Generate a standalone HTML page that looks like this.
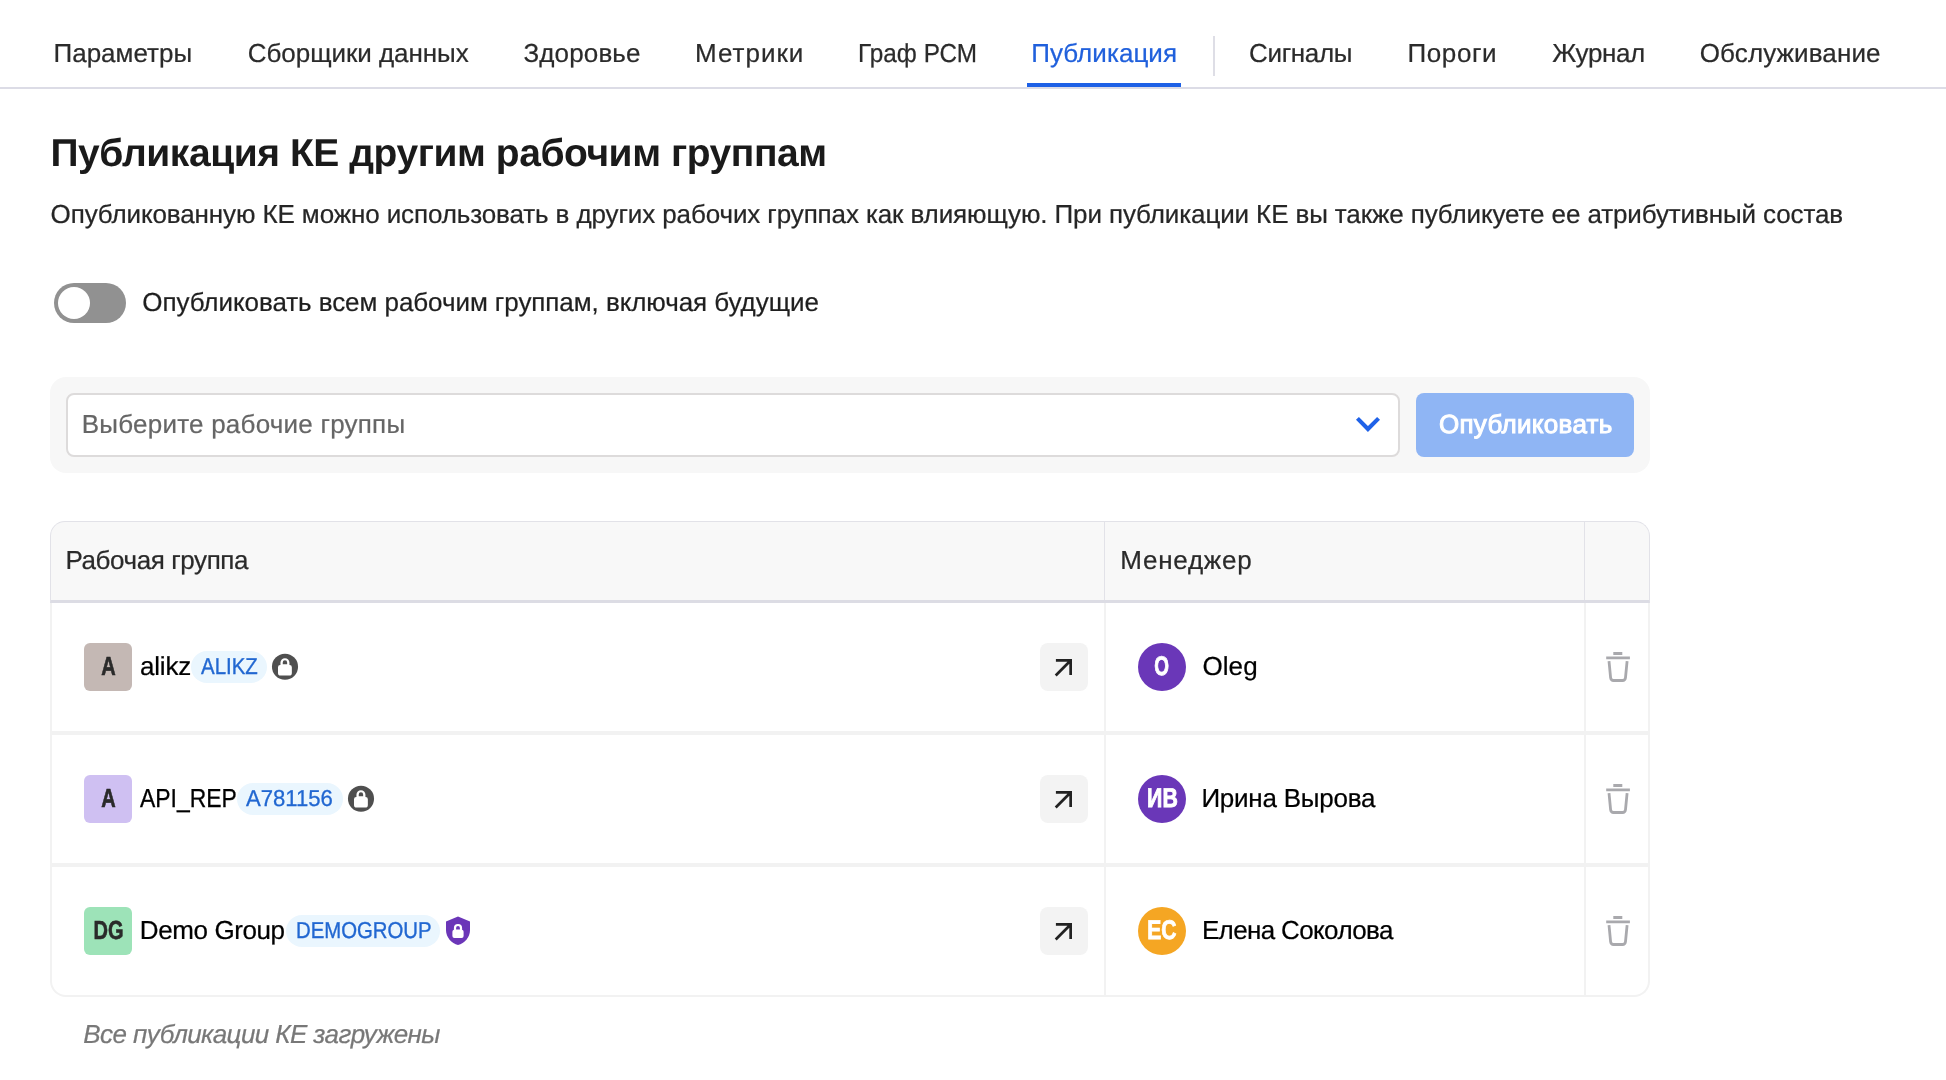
<!DOCTYPE html>
<html lang="ru"><head><meta charset="utf-8"><title>Публикация</title>
<style>
*{box-sizing:border-box;margin:0;padding:0}
html,body{width:1946px;height:1080px;background:#fff;overflow:hidden}
body{font-family:"Liberation Sans",sans-serif;color:#222;position:relative;will-change:transform;-webkit-font-smoothing:antialiased;text-rendering:geometricPrecision}
.t{position:absolute;white-space:nowrap;line-height:1;-webkit-text-stroke:0.22px currentColor}
.a{position:absolute}
.tabline{left:0;top:87px;width:1946px;height:2px;background:#dcdce6}
.underline{left:1027px;top:83px;width:154px;height:4px;background:#1d60e6}
.vdiv{left:1213px;top:36px;width:2px;height:40px;background:#dedee6}
.toggle{left:54px;top:283px;width:72px;height:40px;border-radius:20px;background:#919191}
.toggle i{position:absolute;left:4px;top:4px;width:32px;height:32px;border-radius:50%;background:#fff}
.selbox{left:50px;top:377px;width:1600px;height:96px;background:#f7f7f7;border-radius:16px}
.sel{left:66px;top:393px;width:1334px;height:64px;background:#fff;border:2px solid #dddbdb;border-radius:8px}
.btn{left:1416px;top:393px;width:218px;height:64px;background:#8fb5f4;border-radius:8px}
.thead{left:50px;top:521px;width:1600px;height:82px;background:#f8f8f8;border:1px solid #e2e2e8;border-bottom:3px solid #dcdce4;border-radius:15px 15px 0 0}
.thead i{position:absolute;top:0;width:1px;height:78px;background:#e2e2e8}
.tbody{left:50px;top:603px;width:1600px;height:394px;background:#fff;border:2px solid #f2f2f2;border-top:0;border-radius:0 0 16px 16px}
.tbody i{position:absolute;top:0;width:2px;height:392px;background:#f2f2f2}
.tbody u{position:absolute;left:0;width:1596px;height:4px;background:#f2f2f2}
.ava{width:48px;height:48px;border-radius:6px;left:84px}
.tag{height:32px;border-radius:16px;background:#eaf6fe}
.ext{left:1040px;width:48px;height:48px;border-radius:8px;background:#f3f3f3}
.circ{left:1138px;width:48px;height:48px;border-radius:50%}
.al{position:absolute;left:0;top:0;width:48px;height:48px;line-height:46px;text-align:center;font-weight:bold;font-size:26px;white-space:nowrap;-webkit-text-stroke:0.6px currentColor}
.al b{display:inline-block;transform-origin:50% 50%}
svg{position:absolute;overflow:visible}
</style></head><body>
<span class="t" style="left:53.50px;top:39.99px;font-size:26px;color:#2b2b2b;letter-spacing:-0.001px;">Параметры</span>
<span class="t" style="left:247.75px;top:39.99px;font-size:26px;color:#2b2b2b;letter-spacing:-0.053px;">Сборщики данных</span>
<span class="t" style="left:523.39px;top:39.99px;font-size:26px;color:#2b2b2b;letter-spacing:0.153px;">Здоровье</span>
<span class="t" style="left:695.00px;top:39.99px;font-size:26px;color:#2b2b2b;letter-spacing:1.000px;">Метрики</span>
<span class="t" style="left:857.63px;top:39.99px;font-size:26px;color:#2b2b2b;letter-spacing:0.000px;-webkit-text-stroke-width:0.25px;transform:scaleX(0.9355);transform-origin:0 0;">Граф РСМ</span>
<span class="t" style="left:1031.25px;top:39.99px;font-size:26px;color:#2060dc;letter-spacing:0.053px;">Публикация</span>
<span class="t" style="left:1249.00px;top:39.99px;font-size:26px;color:#2b2b2b;letter-spacing:-0.333px;">Сигналы</span>
<span class="t" style="left:1407.50px;top:39.99px;font-size:26px;color:#2b2b2b;letter-spacing:0.600px;">Пороги</span>
<span class="t" style="left:1552.19px;top:39.99px;font-size:26px;color:#2b2b2b;letter-spacing:-0.356px;">Журнал</span>
<span class="t" style="left:1699.75px;top:39.99px;font-size:26px;color:#2b2b2b;letter-spacing:0.110px;">Обслуживание</span>
<div class="a tabline"></div><div class="a underline"></div><div class="a vdiv"></div>
<span class="t" style="left:50.50px;top:133.59px;font-size:39px;color:#1a1a1a;letter-spacing:-0.447px;font-weight:bold;-webkit-text-stroke-width:0.0px;">Публикация КЕ другим рабочим группам</span>
<span class="t" style="left:50.60px;top:200.79px;font-size:26px;color:#262626;letter-spacing:-0.111px;">Опубликованную КЕ можно использовать в других рабочих группах как влияющую. При публикации КЕ вы также публикуете ее атрибутивный состав</span>
<div class="a toggle"><i></i></div>
<span class="t" style="left:142.30px;top:288.99px;font-size:26px;color:#1f1f1f;letter-spacing:-0.062px;">Опубликовать всем рабочим группам, включая будущие</span>
<div class="a selbox"></div><div class="a sel"></div>
<span class="t" style="left:81.75px;top:410.99px;font-size:26px;color:#666;letter-spacing:0.227px;">Выберите рабочие группы</span>
<svg style="left:1354px;top:414px" width="28" height="20"><path d="M3.45 4.35 L13.95 15.05 L24.55 4.35" fill="none" stroke="#1f62e8" stroke-width="4.1"/></svg>
<div class="a btn"></div>
<span class="t" style="left:1438.89px;top:410.59px;font-size:26px;color:#fff;letter-spacing:0.316px;-webkit-text-stroke-width:1.0px;">Опубликовать</span>
<div class="a thead"><i style="left:1053px"></i><i style="left:1533px"></i></div><div class="a tbody"><i style="left:1052px"></i><i style="left:1532px"></i><u style="top:128px"></u><u style="top:260px"></u></div>
<span class="t" style="left:65.40px;top:546.79px;font-size:26px;color:#2a2a2a;letter-spacing:-0.402px;">Рабочая группа</span>
<span class="t" style="left:1120.30px;top:546.79px;font-size:26px;color:#2a2a2a;letter-spacing:0.744px;">Менеджер</span>
<div class="a ava" style="top:643px;background:#c4b8b4"><span class="al" style="color:#2a2a2a"><b style="transform:scaleX(0.77)">A</b></span></div>
<span class="t" style="left:140.00px;top:652.79px;font-size:26px;color:#000;letter-spacing:-0.195px;">alikz</span>
<div class="a tag" style="left:191px;top:651px;width:76px"></div>
<span class="t" style="left:201.04px;top:654.53px;font-size:23px;color:#2167d1;letter-spacing:0.000px;-webkit-text-stroke-width:0.35px;transform:scaleX(0.8884);transform-origin:0 0;">ALIKZ</span>
<svg style="left:271px;top:653px" width="27" height="27" viewBox="0 0 27 27"><g transform="translate(0.5 0.3)"><circle cx="13.5" cy="13.5" r="13.05" fill="#4f4f4f"/><path fill="#fff" fill-rule="evenodd" d="M8.95 11.6 V9.4 a4.5 4.5 0 0 1 9 0 V11.6 a2.3 2.3 0 0 1 2.4 2.3 V19.6 a2.6 2.6 0 0 1 -2.6 2.6 H9.1 a2.6 2.6 0 0 1 -2.6 -2.6 V13.9 a2.3 2.3 0 0 1 2.45 -2.3 Z M11.25 10.85 H15.65 V9.2 a2.2 2.2 0 0 0 -4.4 0 Z"/></g></svg>
<div class="a ext" style="top:643px"><svg style="left:0;top:0" width="48" height="48"><path d="M15.9 17.45 H30.65 V31.9 M30.6 17.5 L15.7 32.5" fill="none" stroke="#222" stroke-width="2.7" stroke-linecap="butt" stroke-linejoin="miter"/></svg></div>
<div class="a circ" style="top:643px;background:#6a37b8"><span class="al" style="color:#fff;font-size:27px;-webkit-text-stroke:0.9px #fff"><b style="transform:scaleX(0.7)">O</b></span></div>
<span class="t" style="left:1202.40px;top:652.99px;font-size:26px;color:#000;letter-spacing:0.104px;">Oleg</span>
<svg style="left:1604px;top:651px" width="28" height="32"><path d="M9.3 2.5 H18.3 M2.2 6.9 H25.9 M5 10.1 L6.6 26.6 Q6.9 29.5 9.6 29.5 H18.5 Q21.2 29.5 21.5 26.6 L23.1 10.1" fill="none" stroke="#a9a9ad" stroke-width="2.8"/></svg>
<div class="a ava" style="top:775px;background:#cfc0f2"><span class="al" style="color:#2a2a2a"><b style="transform:scaleX(0.77)">A</b></span></div>
<span class="t" style="left:140.02px;top:784.79px;font-size:26px;color:#000;letter-spacing:0.000px;-webkit-text-stroke-width:0.3px;transform:scaleX(0.8810);transform-origin:0 0;">API_REP</span>
<div class="a tag" style="left:237px;top:783px;width:106px"></div>
<span class="t" style="left:246.48px;top:786.53px;font-size:23px;color:#2167d1;letter-spacing:0.000px;-webkit-text-stroke-width:0.3px;transform:scaleX(0.9617);transform-origin:0 0;">A781156</span>
<svg style="left:347px;top:785px" width="27" height="27" viewBox="0 0 27 27"><g transform="translate(0.5 0.3)"><circle cx="13.5" cy="13.5" r="13.05" fill="#4f4f4f"/><path fill="#fff" fill-rule="evenodd" d="M8.95 11.6 V9.4 a4.5 4.5 0 0 1 9 0 V11.6 a2.3 2.3 0 0 1 2.4 2.3 V19.6 a2.6 2.6 0 0 1 -2.6 2.6 H9.1 a2.6 2.6 0 0 1 -2.6 -2.6 V13.9 a2.3 2.3 0 0 1 2.45 -2.3 Z M11.25 10.85 H15.65 V9.2 a2.2 2.2 0 0 0 -4.4 0 Z"/></g></svg>
<div class="a ext" style="top:775px"><svg style="left:0;top:0" width="48" height="48"><path d="M15.9 17.45 H30.65 V31.9 M30.6 17.5 L15.7 32.5" fill="none" stroke="#222" stroke-width="2.7" stroke-linecap="butt" stroke-linejoin="miter"/></svg></div>
<div class="a circ" style="top:775px;background:#6a37b8"><span class="al" style="color:#fff;font-size:27px;-webkit-text-stroke:0.9px #fff"><b style="transform:scaleX(0.79)">ИВ</b></span></div>
<span class="t" style="left:1201.40px;top:784.99px;font-size:26px;color:#000;letter-spacing:-0.231px;">Ирина Вырова</span>
<svg style="left:1604px;top:783px" width="28" height="32"><path d="M9.3 2.5 H18.3 M2.2 6.9 H25.9 M5 10.1 L6.6 26.6 Q6.9 29.5 9.6 29.5 H18.5 Q21.2 29.5 21.5 26.6 L23.1 10.1" fill="none" stroke="#a9a9ad" stroke-width="2.8"/></svg>
<div class="a ava" style="top:907px;background:#9de3b8"><span class="al" style="color:#2a2a2a"><b style="transform:scaleX(0.77)">DG</b></span></div>
<span class="t" style="left:139.80px;top:916.79px;font-size:26px;color:#000;letter-spacing:-0.395px;">Demo Group</span>
<div class="a tag" style="left:285.5px;top:915px;width:154.2px"></div>
<span class="t" style="left:295.62px;top:918.53px;font-size:23px;color:#2167d1;letter-spacing:0.000px;-webkit-text-stroke-width:0.35px;transform:scaleX(0.8844);transform-origin:0 0;">DEMOGROUP</span>
<svg style="left:445px;top:916.1px" width="26" height="30" viewBox="0 0 26 30"><path fill="#6b36b8" d="M13 0.4 L25 5.5 V14 C25 21.5 19.5 27.3 13 29 C6.5 27.3 1 21.5 1 14 V5.5 Z"/><path fill="#fff" fill-rule="evenodd" d="M8.9 13.8 V12 a4.1 4.1 0 0 1 8.2 0 V13.8 a1.9 1.9 0 0 1 1.5 1.9 V20 a2 2 0 0 1 -2 2 H9.4 a2 2 0 0 1 -2 -2 V15.7 a1.9 1.9 0 0 1 1.5 -1.9 Z M11.1 13.6 H14.9 V12 a1.9 1.9 0 0 0 -3.8 0 Z"/></svg>
<div class="a ext" style="top:907px"><svg style="left:0;top:0" width="48" height="48"><path d="M15.9 17.45 H30.65 V31.9 M30.6 17.5 L15.7 32.5" fill="none" stroke="#222" stroke-width="2.7" stroke-linecap="butt" stroke-linejoin="miter"/></svg></div>
<div class="a circ" style="top:907px;background:#f5a623"><span class="al" style="color:#fff;font-size:27px;-webkit-text-stroke:0.9px #fff"><b style="transform:scaleX(0.78)">ЕС</b></span></div>
<span class="t" style="left:1201.90px;top:916.99px;font-size:26px;color:#000;letter-spacing:-0.632px;">Елена Соколова</span>
<svg style="left:1604px;top:915px" width="28" height="32"><path d="M9.3 2.5 H18.3 M2.2 6.9 H25.9 M5 10.1 L6.6 26.6 Q6.9 29.5 9.6 29.5 H18.5 Q21.2 29.5 21.5 26.6 L23.1 10.1" fill="none" stroke="#a9a9ad" stroke-width="2.8"/></svg>
<span class="t" style="left:83.32px;top:1020.79px;font-size:26px;color:#787878;letter-spacing:-0.592px;font-style:italic;">Все публикации КЕ загружены</span>
</body></html>
